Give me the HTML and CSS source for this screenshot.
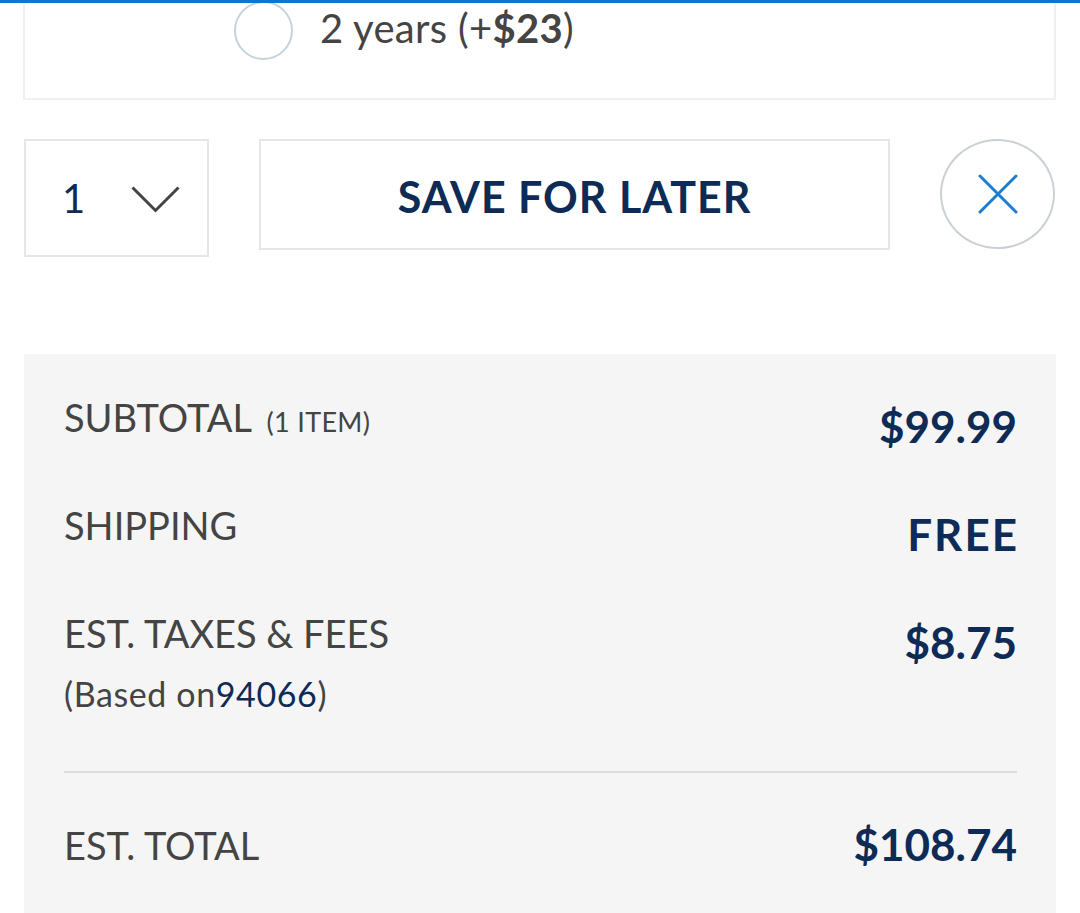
FILE: index.html
```html
<!DOCTYPE html>
<html lang="en">

<head>
    <meta charset="UTF-8">
    <meta name="viewport" content="width=device-width, initial-scale=1.0">
    <title>Cart</title>
    <link rel="stylesheet" href="styles.css">
</head>

<body>
    <div class="topbar"></div>

    <section class="plan-card">
        <label class="plan-option">
            <span class="radio"></span>
            <span class="plan-text">2 years (+<b>$23</b>)</span>
        </label>
    </section>

    <div class="item-actions">
        <div class="qty-select">
            <span class="qty-value">1</span>
            <svg class="chevron" width="49" height="27" viewBox="0 0 49 27">
                <path d="M1.5 1.5 L24.5 24.5 L47.5 1.5" fill="none" stroke="#444" stroke-width="3" />
            </svg>
        </div>
        <button class="save-btn">SAVE FOR LATER</button>
        <button class="remove-btn" aria-label="Remove">
            <svg width="40" height="40" viewBox="0 0 40 40">
                <path d="M2 2 L38 38 M38 2 L2 38" stroke="#1c7ed0" stroke-width="3" stroke-linecap="round" />
            </svg>
        </button>
    </div>

    <section class="summary">
        <div class="summary-row">
            <div class="summary-label">SUBTOTAL <small>(1 ITEM)</small></div>
            <div class="summary-value">$99.99</div>
        </div>
        <div class="summary-row">
            <div class="summary-label">SHIPPING</div>
            <div class="summary-value free">FREE</div>
        </div>
        <div class="summary-row taxes">
            <div>
                <div class="summary-label">EST. TAXES &amp; FEES</div>
                <div class="summary-note">(Based on<a href="#">94066</a>)</div>
            </div>
            <div class="summary-value">$8.75</div>
        </div>
        <hr class="summary-divider">
        <div class="summary-row total">
            <div class="summary-label">EST. TOTAL</div>
            <div class="summary-value">$108.74</div>
        </div>
    </section>
</body>

</html>
```

FILE: styles.css
```css
* {
    box-sizing: border-box;
    font-family: Lato, 'Liberation Sans', Arial, sans-serif;
}

body {
    margin: 0;
    color: #444;
    background-color: #fff;
}

.topbar {
    position: fixed;
    top: 0;
    left: 0;
    width: 100%;
    height: 3px;
    background-color: #1474c8;
    z-index: 10;
}

.plan-card {
    height: 100px;
    margin: 0 24px 0 23px;
    padding: 1px 0 0 209px;
    border: 2px solid #f0f0f0;
    border-top: none;
}

.plan-option {
    display: flex;
    align-items: flex-start;
    gap: 27px;
}

.radio {
    width: 59px;
    height: 59px;
    border: 2px solid #c6d2da;
    border-radius: 50%;
}

.plan-text {
    margin-top: 3px;
    font-size: 40px;
    line-height: 48px;
    letter-spacing: 0.3px;
    color: #444;
}

.plan-text b {
    font-weight: 700;
}

.item-actions {
    display: flex;
    align-items: flex-start;
    gap: 50px;
    margin: 39px 24px 0;
}

.qty-select {
    display: flex;
    align-items: center;
    gap: 46px;
    width: 185px;
    height: 118px;
    padding-left: 36px;
    border: 2px solid #e6e6e6;
}

.qty-value {
    font-size: 40px;
    color: #0d2b55;
}

.chevron {
    margin-top: 2px;
}

.save-btn {
    width: 631px;
    height: 111px;
    padding: 4px 0 0;
    border: 2px solid #e6e6e6;
    background-color: #fff;
    color: #0d2b55;
    font-size: 43px;
    font-weight: 700;
    letter-spacing: 1px;
}

.remove-btn {
    display: flex;
    align-items: center;
    justify-content: center;
    width: 115px;
    height: 110px;
    padding: 0;
    border: 2px solid #c9d1d6;
    border-radius: 50%;
    background-color: #fff;
}

.summary {
    margin: 97px 24px 0;
    padding: 40px 39px 43px 40px;
    background-color: #f5f5f5;
}

.summary-row {
    display: flex;
    justify-content: space-between;
    align-items: flex-start;
    margin-bottom: 49px;
}

.summary-label {
    font-size: 38px;
    line-height: 46px;
    color: #444;
}

.summary-label small {
    margin-left: 6px;
    font-size: 27px;
    letter-spacing: 0.3px;
}

.summary-value {
    margin-top: 6px;
    font-size: 44px;
    line-height: 53px;
    font-weight: 700;
    color: #0d2b55;
}

.summary-value.free {
    letter-spacing: 2px;
    margin-right: -2px;
}

.summary-note {
    margin-top: 19px;
    font-size: 34px;
    line-height: 38px;
    letter-spacing: 0.6px;
    color: #444;
}

.summary-note a {
    color: #0d2b55;
    text-decoration: none;
}

.summary-row.taxes {
    margin-bottom: 0;
}

.summary-divider {
    margin: 58px 0 49px;
    border: none;
    border-top: 2px solid #ddd;
}

.summary-row.total {
    margin-bottom: 0;
}

.summary-row.total .summary-value {
    margin-top: -4px;
}
```
